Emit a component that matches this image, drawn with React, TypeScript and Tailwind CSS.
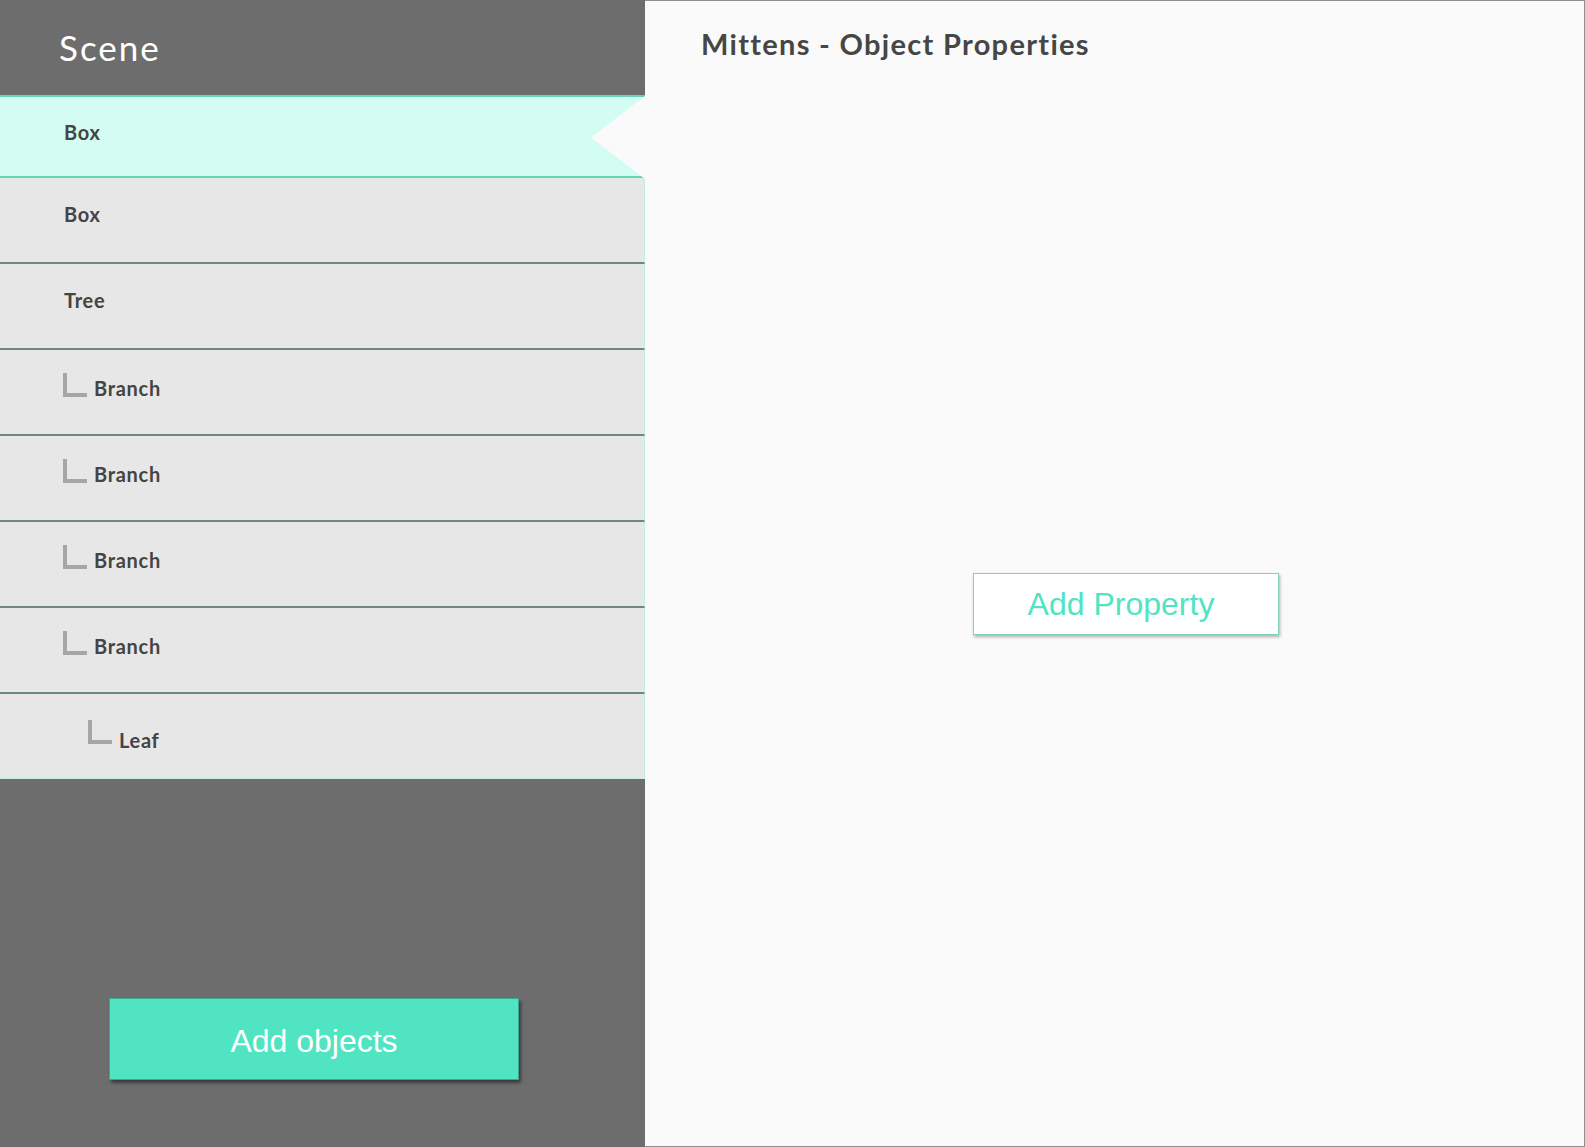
import React from "react";

type Item = {
  label: string;
  depth: number;
};

const items: Item[] = [
  { label: "Box", depth: 0 },
  { label: "Tree", depth: 0 },
  { label: "Branch", depth: 1 },
  { label: "Branch", depth: 1 },
  { label: "Branch", depth: 1 },
  { label: "Branch", depth: 1 },
  { label: "Leaf", depth: 2 },
];

const Elbow = () => (
  <span className="block w-[24px] h-[24px] border-l-4 border-b-4 border-[#a6a6a6]" />
);

const labelCls = "text-[20px] font-bold text-[#444] tracking-[0.7px]";

const Row = ({ item, last }: { item: Item; last: boolean }) => (
  <div
    className={
      last
        ? "h-[85px] flex items-start bg-[#e7e7e7] border-r border-b border-[#c3eee2] pt-[26px] pl-[88px]"
        : "h-[86px] flex items-center bg-[#e7e7e7] border-r border-[#c3eee2] border-b-2 border-b-[#6d8883] pb-[12px]"
    }
  >
    {item.depth === 0 && <span className={"pl-[64px] " + labelCls}>{item.label}</span>}
    {item.depth === 1 && (
      <div className="pl-[63px] flex items-end gap-[7px]">
        <span className="mb-[3px]">
          <Elbow />
        </span>
        <span className={labelCls + " leading-[24px]"}>{item.label}</span>
      </div>
    )}
    {item.depth === 2 && (
      <div className="flex items-end gap-[7px]">
        <span className="mb-[3px]">
          <Elbow />
        </span>
        <span className={labelCls + " leading-[24px] -mb-[5px]"}>{item.label}</span>
      </div>
    )}
  </div>
);

export default function App() {
  return (
    <div
      className="w-[1585px] h-[1147px] flex overflow-hidden"
      style={{ fontFamily: "Lato, 'Noto Sans', sans-serif" }}
    >
      <aside className="w-[645px] shrink-0 flex flex-col bg-[#6d6d6d]">
        <div className="h-[95px] flex items-center pl-[59px]">
          <h1 className="text-[35px] text-white tracking-[2px] font-normal">Scene</h1>
        </div>

        <div className="relative h-[83px] flex items-center bg-[#d3fdf2] border-t-2 border-b-2 border-[#63d6b8] pb-[9px]">
          <span className={"pl-[64px] " + labelCls}>Box</span>
          <svg
            className="absolute right-0 -top-[1px]"
            width="54"
            height="83"
            viewBox="0 0 54 83"
          >
            <polygon points="54,0 0,41.5 54,83" fill="#fafafa" />
          </svg>
        </div>

        {items.map((item, i) => (
          <Row key={i} item={item} last={i === items.length - 1} />
        ))}

        <div className="flex-1 flex flex-col justify-end pb-[67px] pl-[109px]">
          <button
            className="w-[410px] h-[82px] pt-[3px] bg-[#51e4c2] border border-[#37a98f] text-white text-[32px] shadow-[2px_3px_3px_rgba(0,0,0,0.45)]"
            style={{ fontFamily: "'Liberation Sans', Arial, sans-serif" }}
          >
            Add objects
          </button>
        </div>
      </aside>

      <main className="flex-1 bg-[#fafafa] border border-l-0 border-[#8f8f8f]">
        <h2 className="pt-[26px] pl-[56px] text-[29px] leading-[34px] font-bold tracking-[1.3px] text-[#464646]">
          Mittens - Object Properties
        </h2>
        <button
          className="mt-[512px] ml-[328px] w-[306px] h-[62px] pr-[10px] bg-white border border-[#82d2bd] text-[#51e4c2] text-[32px] shadow-[1px_2px_3px_rgba(0,0,0,0.3)]"
          style={{ fontFamily: "'Liberation Sans', Arial, sans-serif" }}
        >
          Add Property
        </button>
      </main>
    </div>
  );
}
